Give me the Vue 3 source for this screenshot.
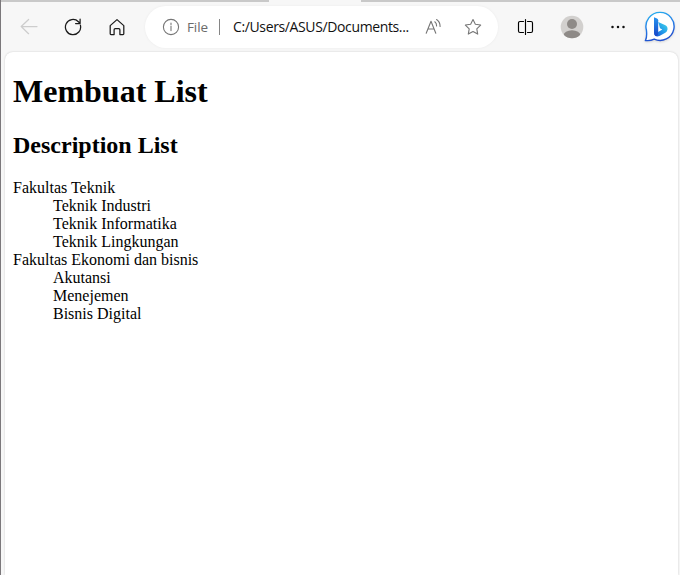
<script setup>
const groups = [
  { term: 'Fakultas Teknik', items: ['Teknik Industri', 'Teknik Informatika', 'Teknik Lingkungan'] },
  { term: 'Fakultas Ekonomi dan bisnis', items: ['Akutansi', 'Menejemen', 'Bisnis Digital'] },
]
</script>

<template>
  <div class="window">
    <div class="tabs"><span class="tab"></span></div>
    <header class="toolbar">
      <button class="btn back" aria-label="Back">
        <svg width="18" height="18" viewBox="0 0 18 18"><path d="M17 8.5H1.2M8.6 1.5 1.2 8.5l7.4 7.2" /></svg>
      </button>
      <button class="btn" aria-label="Refresh">
        <svg width="18" height="18" viewBox="0 0 18 18"><path d="M16.4 7.2A7.6 7.6 0 1 1 14.4 3.7L16 5.3M16.1 1.2v4.3h-4.5" /></svg>
      </button>
      <button class="btn" aria-label="Home">
        <svg width="18" height="18" viewBox="0 0 18 18"><path d="M2.2 7.6 9 1.6l6.8 6v8.2q0 .8-.8.8h-3.1v-4.8q0-1.1-1.1-1.1H7.2q-1.1 0-1.1 1.1v4.8H3q-.8 0-.8-.8z" /></svg>
      </button>
      <div class="omnibox">
        <svg class="info" width="18" height="18" viewBox="0 0 18 18"><circle cx="9" cy="9" r="7.6" /><path d="M9 8v4.6M9 5v1.4" /></svg>
        <span class="scheme">File</span>
        <span class="divider"></span>
        <span class="url">C:/Users/ASUS/Documents...</span>
        <svg class="read" width="18" height="18" viewBox="0 0 18 18"><path d="M1.2 15.2 6 3.3l4.8 11.9M3 11h6M9.8 3.8q1.9 1.5 1.8 4.1M11.6 1.5q3.5 2.3 3.5 7" /></svg>
        <svg class="star" width="18" height="18" viewBox="0 0 18 18"><path d="m9 1.5 2.35 4.8 5.3.75-3.85 3.75.9 5.3L9 13.6l-4.7 2.5.9-5.3-3.85-3.75 5.3-.75z" /></svg>
      </div>
      <button class="btn split" aria-label="Split screen">
        <svg width="18" height="18" viewBox="0 0 18 18"><path d="M6.5 3.5H3Q1.5 3.5 1.5 5v8q0 1.5 1.5 1.5h3.5M10.5 3.5H14q1.5 0 1.5 1.5v8q0 1.5-1.5 1.5h-3.5M8.5 1.5v15" /></svg>
      </button>
      <button class="btn wide" aria-label="Profile">
        <svg class="avatar" width="24" height="24" viewBox="0 0 24 24">
          <defs><clipPath id="face"><circle cx="12" cy="12" r="11.3" /></clipPath></defs>
          <circle cx="12" cy="12" r="11.3" fill="#d2d0ce" />
          <g clip-path="url(#face)" fill="#8e8a87"><circle cx="12" cy="9" r="5" /><ellipse cx="12" cy="20.8" rx="8.5" ry="5.6" /></g>
        </svg>
      </button>
      <button class="btn wide" aria-label="More">
        <svg class="dots" width="18" height="18" viewBox="0 0 18 18"><circle cx="3.5" cy="9" r="1.25" /><circle cx="9" cy="9" r="1.25" /><circle cx="14.5" cy="9" r="1.25" /></svg>
      </button>
      <svg class="bing" width="32" height="34" viewBox="0 0 32 34">
        <defs>
          <linearGradient id="ring" x1="0" y1="0" x2=".3" y2="1"><stop offset="0" stop-color="#25b5ef" /><stop offset=".5" stop-color="#2583ea" /><stop offset="1" stop-color="#2050cf" /></linearGradient>
          <linearGradient id="stem" x1="0" y1="0" x2="0" y2="1"><stop offset="0" stop-color="#2594ef" /><stop offset="1" stop-color="#1746c8" /></linearGradient>
          <linearGradient id="bowl" x1="1" y1="0" x2="0" y2="1"><stop offset="0" stop-color="#42d8e9" /><stop offset=".5" stop-color="#249eea" /><stop offset="1" stop-color="#1950d5" /></linearGradient>
        </defs>
        <path d="M16 2.4A14 14 0 1 1 10.2 29.1Q6.5 31 1.5 30.5 3.2 26.5 2.4 20A14 14 0 0 1 16 2.4z" fill="#fff" stroke="url(#ring)" stroke-width="1.4" />
        <path d="m14.2 12 6.7 3.1q3 1.5 2.6 4.4-.4 2.2-2.2 3.2l-5.9 3.3q-4.4 1.4-4.9-2.1l6.2-3.3 1.6-1.2-2.3-1.2z" fill="url(#bowl)" />
        <path d="m10 7.3 3 1.2q1.2.5 1.2 1.8v13.8l-1.2 1.9q-3 .2-3-3.2z" fill="url(#stem)" />
      </svg>
    </header>
    <main class="page">
      <h1>Membuat List</h1>
      <h2>Description List</h2>
      <dl>
        <template v-for="group in groups" :key="group.term">
          <dt>{{ group.term }}</dt>
          <dd v-for="item in group.items" :key="item">{{ item }}</dd>
        </template>
      </dl>
    </main>
  </div>
</template>

<style>
body { margin: 0; overflow: hidden; }
</style>

<style scoped>
.window {
  box-sizing: border-box;
  width: 680px;
  height: 575px;
  display: flex;
  flex-direction: column;
  background: #f7f7f7;
  border-left: 1px solid #7b787b;
  overflow: hidden;
}
.tabs { height: 2px; flex: none; background: #c9c9c9; padding-left: 268px; }
.tab { display: block; width: 92px; height: 2px; background: #f7f7f7; }
.toolbar {
  box-sizing: border-box;
  height: 50px;
  flex: none;
  display: flex;
  align-items: center;
  padding: 0 3px 0 6px;
}
.btn {
  width: 44px;
  height: 40px;
  padding: 0;
  border: 0;
  background: none;
  display: flex;
  align-items: center;
  justify-content: center;
  flex: none;
}
.btn svg, .omnibox svg { fill: none; stroke: #1b1b1b; stroke-width: 1.25; stroke-linecap: round; stroke-linejoin: round; flex: none; }
.btn.back svg { stroke: #cdcdcd; }
.btn.split svg { stroke: #000; stroke-width: 1.15; }
.btn .avatar { stroke: none; }
.btn .dots { fill: #111; stroke: none; }
.split { margin-left: 6px; }
.wide { margin-left: 2px; }
.bing { flex: none; margin-left: 4px; filter: drop-shadow(0 1px 1px #0002); }
.omnibox {
  box-sizing: border-box;
  width: 353px;
  height: 42px;
  flex: none;
  margin-left: 6px;
  padding-left: 17px;
  border-radius: 21px;
  background: #fff;
  box-shadow: 0 0 3px #0000000d;
  display: flex;
  align-items: center;
  font: 14px/20px "Open Sans", sans-serif;
  white-space: nowrap;
}
.omnibox svg { stroke: #767676; stroke-width: 1.1; }
.scheme { width: 32px; margin-left: 7px; color: #6b6b6b; font-size: 13.5px; letter-spacing: -.1px; }
.divider { width: 1px; height: 16px; background: #858585; }
.url { width: 192px; margin-left: 13px; color: #111; letter-spacing: -.37px; }
.star { margin-left: 21px; }
.page {
  box-sizing: border-box;
  flex: 1;
  margin: 0 2px 0 4px;
  padding: 0 8px;
  display: flow-root;
  background: #fff;
  border-radius: 8px 8px 0 0;
  box-shadow: 0 0 2px #0003;
  color: #000;
  font: 16px/18px "Liberation Serif", "Times New Roman", serif;
}
h1 { margin: 21px 0 22px; font-size: 32px; line-height: 37px; }
h2 { margin: 20px 0; font-size: 24px; line-height: 27px; }
dl { margin: 0; }
dd { margin: 0 0 0 40px; }
</style>
